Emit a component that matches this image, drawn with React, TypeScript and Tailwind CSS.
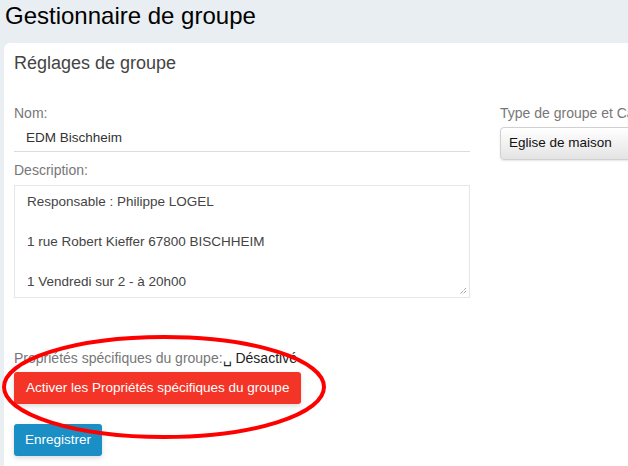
export default function App() {
  return (
    <div className="relative h-[466px] w-[628px] overflow-hidden bg-[#e9eef2] font-['Liberation_Sans',Arial,sans-serif]">
      <h1 className="h-[33px] pl-[5px] pt-[1px] text-[24px] leading-[30px] text-black">
        Gestionnaire de groupe
      </h1>

      <div className="ml-[4px] mt-[10px] h-[500px] rounded-tl-[6px] bg-white pl-[10px] pt-[8px]">
        <h2 className="text-[18px] leading-[24px] text-[#444]">Réglages de groupe</h2>

        <div className="mt-[29px] flex">
          <div className="w-[456px] shrink-0">
            <label className="block h-[18px] text-[14px] leading-[18px] text-[#777]">Nom:</label>
            <div className="mt-[2px] flex h-[28px] items-center border-b border-[#dcdcdc] px-[12px] text-[13.5px] leading-[20px] text-[#333]">
              EDM Bischheim
            </div>

            <label className="mt-[9px] block h-[18px] text-[14px] leading-[18px] text-[#777]">
              Description:
            </label>
            <div className="relative mt-[6px] h-[113px] border border-[#e6e6e6] px-[12px] pt-[6px] text-[13.5px] leading-[20px] text-[#444]">
              <p>Responsable : Philippe LOGEL</p>
              <p className="mt-[20px]">1 rue Robert Kieffer 67800 BISCHHEIM</p>
              <p className="mt-[20px]">1 Vendredi sur 2 - à 20h00</p>
              <svg className="absolute bottom-[2px] right-[2px]" width="8" height="8" viewBox="0 0 8 8">
                <path d="M7 1 L1 7 M7 4 L4 7" stroke="#777" strokeWidth="1" strokeDasharray="1 1" />
              </svg>
            </div>

            <p className="mt-[51px] h-[18px] whitespace-nowrap text-[14px] leading-[18px] text-[#777]">
              Propriétés spécifiques du groupe:<span className="text-[#222]">␣ Désactivé</span>
            </p>
            <button className="mt-[5px] flex h-[32px] items-center rounded-[3px] bg-[#f33426] px-[12px] text-[13.5px] text-white shadow-[0_2px_5px_rgba(0,0,0,0.15)]">
              Activer les Propriétés spécifiques du groupe
            </button>
            <button className="mt-[20px] flex h-[32px] w-[88px] items-center justify-center rounded-[3px] bg-[#1a8fc6] text-[13.5px] text-white shadow-[0_2px_5px_rgba(0,0,0,0.15)]">
              Enregistrer
            </button>
          </div>

          <div className="ml-[30px] min-w-0 flex-1">
            <label className="block h-[18px] whitespace-nowrap text-[14px] leading-[18px] text-[#777]">
              Type de groupe et Ca
            </label>
            <div className="mt-[5px] flex h-[33px] w-[200px] items-center whitespace-nowrap rounded-[4px] border border-[#d0d0d0] bg-gradient-to-b from-white to-[#e4e4e4] pl-[8px] text-[13.5px] text-[#111] shadow-[0_1px_2px_rgba(0,0,0,0.1)]">
              Eglise de maison
            </div>
          </div>
        </div>
      </div>

      <svg className="pointer-events-none absolute left-0 top-0" width="628" height="466">
        <ellipse cx="164" cy="387" rx="160" ry="50" fill="none" stroke="#ff0000" strokeWidth="4" />
      </svg>
    </div>
  );
}
